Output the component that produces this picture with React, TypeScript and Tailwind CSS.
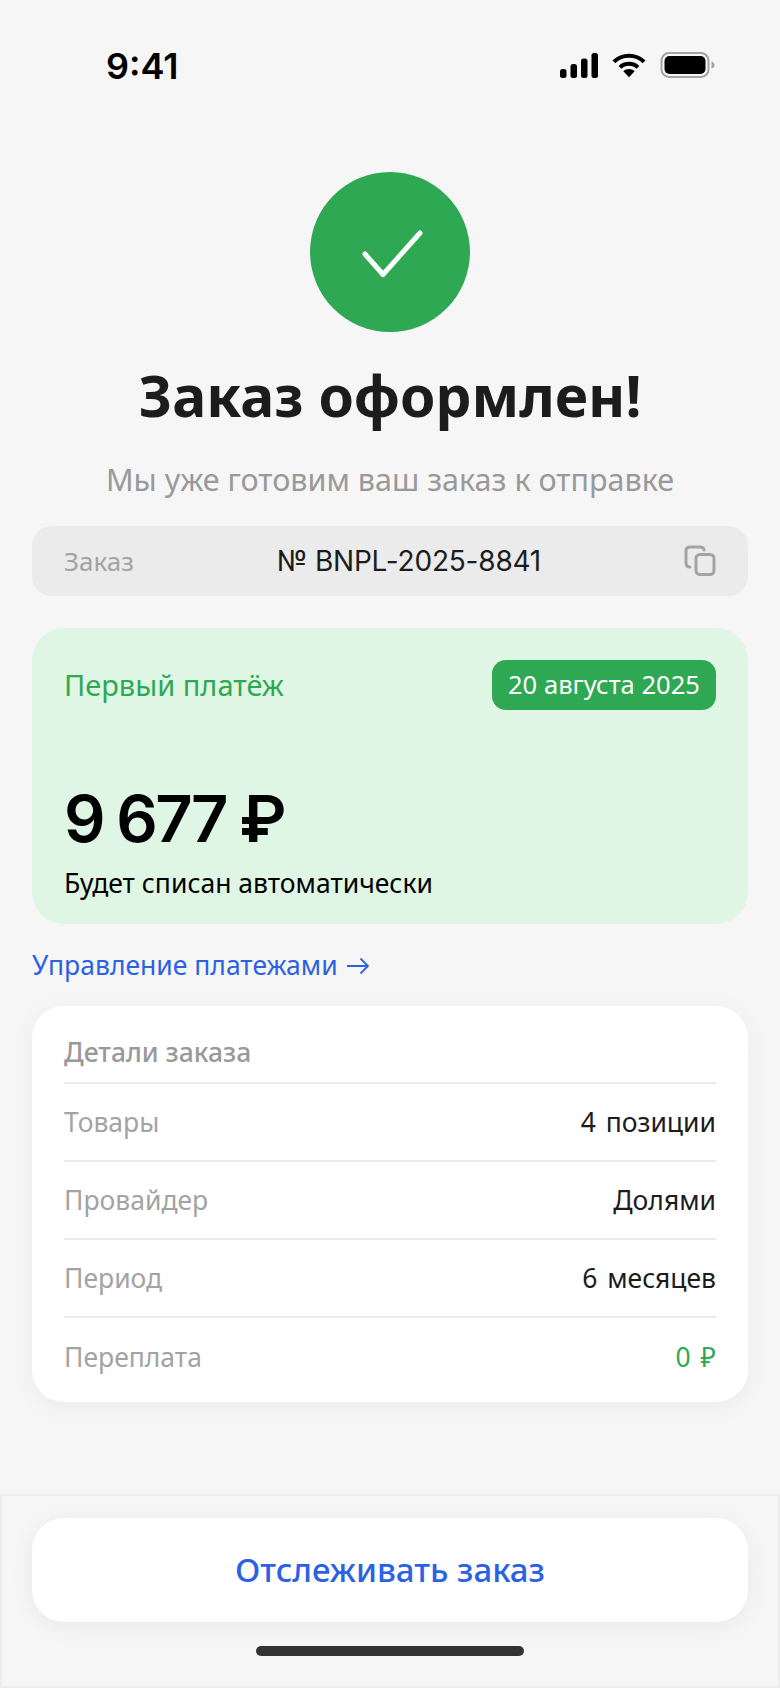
import React from 'react';

const font = "font-['Noto_Sans','Open_Sans',sans-serif]";

const rows = [
    { label: 'Товары', value: '4 позиции', color: 'text-[#1c1c1c]' },
    { label: 'Провайдер', value: 'Долями', color: 'text-[#1c1c1c]' },
    { label: 'Период', value: '6 месяцев', color: 'text-[#1c1c1c]' },
    { label: 'Переплата', value: '0 ₽', color: 'text-[#2ea853]' },
];

const StatusBar = () => (
    <div className="flex h-[172px] items-start justify-between pl-[106px] pr-[65px] pt-[48px]">
        <span className="font-['Inter',sans-serif] text-[36px] leading-[36px] font-semibold text-black">9:41</span>
        <div className="flex items-center gap-[14px] pt-[4px]">
            <svg width="38" height="25" viewBox="0 0 38 25" fill="black">
                <rect x="0" y="16" width="6.5" height="9" rx="2.5" />
                <rect x="10.5" y="11" width="6.5" height="14" rx="2.5" />
                <rect x="21" y="5.5" width="6.5" height="19.5" rx="2.5" />
                <rect x="31.5" y="0" width="6.5" height="25" rx="2.5" />
            </svg>
            <svg width="34" height="25" viewBox="0 0 36 25" fill="none" stroke="black" strokeWidth="4.2">
                <path d="M2 8.5C11 0 25 0 34 8.5" />
                <path d="M8.5 14.5C13.5 9.5 22.5 9.5 27.5 14.5" />
                <path d="M18 25L12 18.5C15 15.5 21 15.5 24 18.5Z" fill="black" stroke="none" />
            </svg>
            <svg width="55" height="26" viewBox="0 0 54 26" fill="none">
                <rect x="1" y="1" width="47" height="24" rx="7.5" stroke="#a3a3a3" strokeWidth="2" />
                <rect x="4" y="4" width="41" height="18" rx="5" fill="black" />
                <path d="M51 9.5C53 10 54 11.5 54 13C54 14.5 53 16 51 16.5Z" fill="#a3a3a3" />
            </svg>
        </div>
    </div>
);

const App: React.FC = () => {
    return (
        <div className={`${font} flex h-[1688px] w-[780px] flex-col bg-[#f6f6f6]`}>
            <StatusBar />

            <div className="flex flex-col items-center px-[32px]">
                <div className="flex h-[160px] w-[160px] items-center justify-center rounded-full bg-[#2fa853]">
                    <svg width="64" height="48" viewBox="0 0 64 48" fill="none" stroke="white" strokeWidth="5" strokeLinecap="round" strokeLinejoin="round" className="overflow-visible">
                        <path d="M7 26L25 46.5L62 5" />
                    </svg>
                </div>
                <h1 className="mt-[27px] text-[57px] leading-[72px] font-bold text-[#1c1c1c]">Заказ оформлен!</h1>
                <p className="mt-[28px] text-[30.5px] leading-[40px] text-[#999999]">Мы уже готовим ваш заказ к отправке</p>

                <div className="mt-[27px] flex h-[70px] w-full items-center justify-between rounded-[20px] bg-[#ebebeb] px-[32px]">
                    <span className="text-[26px] text-[#a3a3a3]">Заказ</span>
                    <span className="font-['Inter',sans-serif] text-[28px] tracking-[-0.2px] text-[#1c1c1c]">№ BNPL-2025-8841</span>
                    <svg width="32" height="32" viewBox="0 0 32 32" fill="none" stroke="#a3a3a3" strokeWidth="3" strokeLinecap="round">
                        <rect x="12" y="9.5" width="18" height="20" rx="4" />
                        <path d="M6 22C3.5 22 2 20.5 2 18V6C2 3.5 3.5 2 6 2H16C18.5 2 20 3.5 20 5" />
                    </svg>
                </div>

                <div className="mt-[32px] flex h-[296px] w-full flex-col rounded-[32px] bg-[#e0f6e5] p-[32px] pb-[23px]">
                    <div className="flex items-center justify-between">
                        <span className="text-[29px] text-[#2ea853]">Первый платёж</span>
                        <span className="flex h-[50px] items-center rounded-[14px] bg-[#2fa853] px-[16px] text-[25.6px] text-white">20 августа 2025</span>
                    </div>
                    <div className="mt-auto font-['Inter',sans-serif] text-[65px] leading-[72px] font-semibold tracking-[-2.8px] text-black">9 677 ₽</div>
                    <div className="mt-[10px] text-[26.5px] leading-[36px] text-black">Будет списан автоматически</div>
                </div>

                <div className="mt-[24px] flex h-[34px] w-full items-center gap-[9px] pt-[1px] text-[26.5px] text-[#2b62e3]">
                    Управление платежами
                    <svg width="22" height="18" viewBox="0 0 22 18" fill="none" stroke="#2b62e3" strokeWidth="1.8">
                        <path d="M0 9H21M13.5 1.5L21 9L13.5 16.5" />
                    </svg>
                </div>

                <div className="mt-[24px] w-full rounded-[32px] bg-white px-[32px] pb-[6px] shadow-[0_4px_24px_rgba(0,0,0,0.05)]">
                    <div className="flex h-[78px] items-center border-b-2 border-[#ebebeb] pt-[17px] text-[26.5px] font-medium text-[#999999]">Детали заказа</div>
                    {rows.map((row, i) => (
                        <div key={row.label} className={`flex h-[78px] items-center justify-between pt-[2px] text-[26.5px] ${i < rows.length - 1 ? 'border-b-2 border-[#ebebeb]' : ''}`}>
                            <span className="text-[#a3a3a3]">{row.label}</span>
                            <span className={`${row.color} [word-spacing:3px]`}>{row.value}</span>
                        </div>
                    ))}
                </div>
            </div>

            <div className="mt-auto flex h-[194px] flex-col items-center border-2 border-[#ececec] bg-[#f6f6f6] px-[30px] pt-[22px]">
                <button className="h-[104px] w-full rounded-[32px] bg-white text-[33px] font-medium text-[#2b62e3] shadow-[0_4px_24px_rgba(0,0,0,0.06)]">
                    Отслеживать заказ
                </button>
                <div className="mt-[24px] h-[10px] w-[268px] rounded-full bg-[#333333]" />
            </div>
        </div>
    );
};

export default App;
